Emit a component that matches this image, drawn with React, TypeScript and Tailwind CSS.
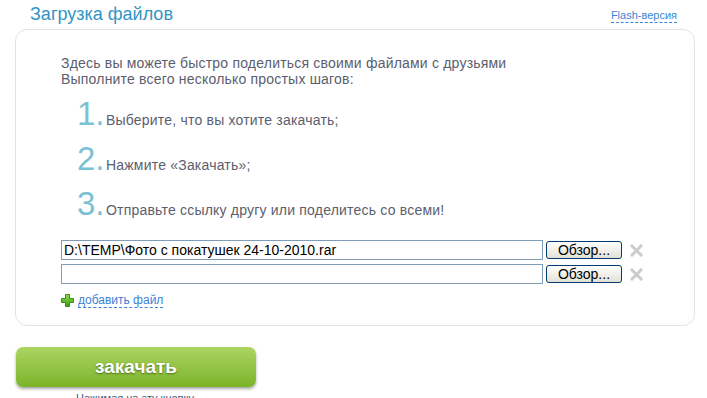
import React from "react";

const Plus = () => (
  <svg width="13" height="13" viewBox="0 0 13 13">
    <defs>
      <linearGradient id="pg" x1="0" y1="0" x2="0" y2="1">
        <stop offset="0" stopColor="#8fe04a" />
        <stop offset="1" stopColor="#3a9a10" />
      </linearGradient>
    </defs>
    <path d="M4.5 0.5h4v4h4v4h-4v4h-4v-4h-4v-4h4z" fill="url(#pg)" stroke="#3c8c18" strokeWidth="1" />
  </svg>
);

const Cross = () => (
  <svg width="13" height="13" viewBox="0 0 13 13">
    <path d="M2 2L11 11M11 2L2 11" stroke="#cccccc" strokeWidth="3" strokeLinecap="square" />
  </svg>
);

function FileRow({ value }: { value: string }) {
  return (
    <div className="flex items-center h-[20px]">
      <div className="w-[482px] h-[20px] border border-[#7f9db9] bg-white text-[14px] leading-[18px] pl-[2px] text-black overflow-hidden whitespace-nowrap">
        {value}
      </div>
      <div className="ml-[3px] w-[76px] h-[18px] border border-[#003c74] rounded-[3px] bg-gradient-to-b from-white to-[#e3e1d6] text-[14px] leading-[16px] text-black text-center">
        Обзор...
      </div>
      <div className="ml-[8px] flex items-center">
        <Cross />
      </div>
    </div>
  );
}

export default function App() {
  return (
    <div className="w-[707px] h-[398px] overflow-hidden bg-white font-['Liberation_Sans',Arial,sans-serif]">
      <div className="flex items-end justify-between pl-[30px] pr-[30px] h-[29px]">
        <div className="text-[18px] leading-[22px] text-[#2f96c4] pb-[4px]">Загрузка файлов</div>
        <div className="text-[11px] leading-[13px] text-[#3a86d6] border-b border-dashed border-[#3a86d6] mb-[6px]">
          Flash-версия
        </div>
      </div>
      <div className="ml-[15px] w-[680px] h-[297px] border border-[#e3e3e3] rounded-[12px] pl-[45px] pt-[25px]">
        <div className="text-[14px] leading-[16px] tracking-[0.2px] text-[#5b5e6e]">
          <div>Здесь вы можете быстро поделиться своими файлами с друзьями</div>
          <div>Выполните всего несколько простых шагов:</div>
        </div>
        <div className="mt-[8px] pl-[16px] flex flex-col gap-[8px]">
          {["Выберите, что вы хотите закачать;", "Нажмите «Закачать»;", "Отправьте ссылку другу или поделитесь со всеми!"].map((t, i) => (
            <div key={i} className="flex items-baseline h-[37px]">
              <span className="text-[33px] leading-[37px] text-[#7bc1d6] w-[29px]">{i + 1}.</span>
              <span className="text-[14px] tracking-[0.2px] text-[#5b5e6e]">{t}</span>
            </div>
          ))}
        </div>
        <div className="mt-[18px] flex flex-col gap-[4px]">
          <FileRow value="D:\TEMP\Фото с покатушек 24-10-2010.rar" />
          <FileRow value="" />
        </div>
        <div className="mt-[9px] flex items-center gap-[4px]">
          <Plus />
          <span className="text-[12px] leading-[14px] text-[#3a7fd8] border-b border-dashed border-[#3a7fd8]">добавить файл</span>
        </div>
      </div>
      <div className="mt-[21px] ml-[16px] w-[240px]">
        <div className="h-[40px] rounded-[7px] bg-gradient-to-b from-[#acd461] to-[#7ab425] shadow-[0_2px_3px_rgba(0,0,0,0.35)] flex items-center justify-center">
          <span className="text-white font-bold text-[19px] [text-shadow:0_1px_2px_rgba(0,0,0,0.45)]">закачать</span>
        </div>
        <div className="mt-[5px] text-center text-[11px] leading-[13px] text-[#3d5a7a]">Нажимая на эту кнопку,</div>
      </div>
    </div>
  );
}
